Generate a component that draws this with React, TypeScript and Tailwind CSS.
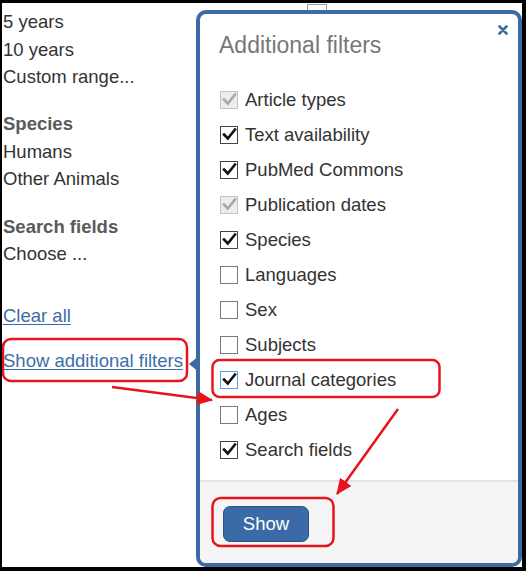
import React from "react";

type Box = "checked" | "disabled" | "unchecked" | "focused";

const items: { label: string; state: Box }[] = [
  { label: "Article types", state: "disabled" },
  { label: "Text availability", state: "checked" },
  { label: "PubMed Commons", state: "checked" },
  { label: "Publication dates", state: "disabled" },
  { label: "Species", state: "checked" },
  { label: "Languages", state: "unchecked" },
  { label: "Sex", state: "unchecked" },
  { label: "Subjects", state: "unchecked" },
  { label: "Journal categories", state: "focused" },
  { label: "Ages", state: "unchecked" },
  { label: "Search fields", state: "checked" },
];

function CheckBox({ state }: { state: Box }) {
  const boxCls =
    state === "disabled"
      ? "border-[#c4c4c4] bg-[#ececec]"
      : state === "focused"
      ? "border-[#5aa2e0] bg-white"
      : state === "checked"
      ? "border-[#444] bg-white"
      : "border-[#7a7a7a] bg-white";
  const tick = state === "disabled" ? "#a8a8a8" : "#111";
  return (
    <div className={`w-[18px] h-[18px] border-[1.5px] flex items-center justify-center shrink-0 ${boxCls}`}>
      {state !== "unchecked" && (
        <svg width="15" height="15" viewBox="0 0 15 15">
          <path d="M2 7.5 L5.8 11.5 L13 2.5" fill="none" stroke={tick} strokeWidth="2.6" strokeLinecap="square" strokeLinejoin="miter" />
        </svg>
      )}
    </div>
  );
}

export default function App() {
  return (
    <div className="relative w-[526px] h-[571px] bg-black border-t-[3px] border-l-[2px] border-r-[4px] border-b-[4px] border-black font-['Liberation_Sans',Arial,sans-serif] overflow-hidden">
      <div className="relative flex w-full h-full bg-white">
        {/* left column */}
        <div className="w-[194px] shrink-0 pt-[5px] pl-[1px] text-[18.5px] leading-[27.5px] text-[#333]">
          <div>5 years</div>
          <div>10 years</div>
          <div>Custom range...</div>
          <div className="mt-[19.5px] font-bold text-[#5a5a5a]">Species</div>
          <div>Humans</div>
          <div>Other Animals</div>
          <div className="mt-[20px] font-bold text-[#5a5a5a]">Search fields</div>
          <div>Choose ...</div>
          <div className="mt-[34px] text-[#3b6ea8] underline underline-offset-2">Clear all</div>
          <div className="mt-[17.5px] text-[#3b6ea8] underline underline-offset-2">Show additional filters</div>
        </div>

        {/* peeking element behind popup */}
        <div className="absolute left-[305px] top-[1px] w-[20px] h-[10px] border border-[#9a9a9a] bg-white" />

        {/* popup */}
        <div className="relative mt-[7px] flex-1 h-[557px] border-[4px] border-[#3b6aa4] rounded-[10px] bg-white flex flex-col">
          <svg className="absolute left-[-11px] top-[341px]" width="11" height="18" viewBox="0 0 11 18">
            <polygon points="0,9 11,0 11,18" fill="#3b6aa4" />
          </svg>
          <svg className="absolute right-[10px] top-[11px]" width="10" height="10" viewBox="0 0 10 10">
            <path d="M1.5 1.5 L8.5 8.5 M8.5 1.5 L1.5 8.5" stroke="#3b6aa4" strokeWidth="2.6" strokeLinecap="round" />
          </svg>
          <div className="pt-[16px] pl-[19px] text-[23px] leading-[30px] text-[#777]">Additional filters</div>
          <div className="mt-[22px] pl-[20px] flex flex-col">
            {items.map((it) => (
              <div key={it.label} className="h-[35px] flex items-center gap-[7px]">
                <CheckBox state={it.state} />
                <span className="text-[18.5px] leading-[22px] text-[#333]">{it.label}</span>
              </div>
            ))}
          </div>
          <div className="mt-[13px] flex-1 bg-[#f5f5f5] border-t-[2px] border-[#e4e4e4] rounded-b-[6px] pl-[23px] pt-[24px]">
            <button className="w-[86px] h-[36px] bg-[#3a6ba6] border border-[#2a5789] rounded-[7px] text-white text-[18.5px] leading-none">
              Show
            </button>
          </div>
        </div>
      </div>

      {/* annotations */}
      <svg className="absolute left-[-2px] top-[-3px] pointer-events-none" width="526" height="571" viewBox="0 0 526 571">
        <defs>
          <marker id="ah" markerUnits="userSpaceOnUse" markerWidth="16" markerHeight="14" refX="15" refY="7" orient="auto">
            <polygon points="0,0 16,7 0,14" fill="#e8141c" />
          </marker>
        </defs>
        <rect x="3" y="339" width="184" height="42" rx="8" fill="none" stroke="#e8141c" strokeWidth="2.5" />
        <rect x="212.5" y="360" width="227" height="37" rx="7" fill="none" stroke="#e8141c" strokeWidth="2.5" />
        <rect x="212.5" y="498" width="121" height="48" rx="8" fill="none" stroke="#e8141c" strokeWidth="2.5" />
        <line x1="112" y1="387" x2="212" y2="400" stroke="#e8141c" strokeWidth="2.5" markerEnd="url(#ah)" />
        <line x1="398" y1="409" x2="337" y2="494" stroke="#e8141c" strokeWidth="2.5" markerEnd="url(#ah)" />
      </svg>
    </div>
  );
}
